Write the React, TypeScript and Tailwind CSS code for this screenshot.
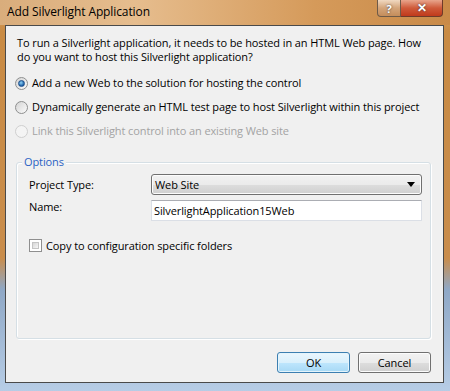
import React from "react";

const font = { fontFamily: '"Open Sans", "Noto Sans", sans-serif' };

function Radio({ checked, disabled }: { checked?: boolean; disabled?: boolean }) {
  return (
    <span
      className={`relative inline-flex h-[13px] w-[13px] shrink-0 items-center justify-center rounded-full border ${
        disabled ? "border-[#cfcfcf] bg-[#f4f4f4]" : "border-[#8e8f8f] bg-gradient-to-br from-[#d4d4d4] to-[#fbfbfb]"
      }`}
    >
      {checked && (
        <span className="h-[7px] w-[7px] rounded-full border border-[#1d4f8a] bg-[radial-gradient(circle_at_40%_35%,#8fd3f5,#1b5fa8_70%)]" />
      )}
    </span>
  );
}

export default function App() {
  return (
    <div
      className="flex h-[391px] w-[450px] flex-col overflow-hidden bg-[linear-gradient(180deg,#dba56a_0%,#c98b44_8%,#c98d4c_66%,#8fa8c6_74%,#b7cde6_100%)] pb-[8px] pl-[5px] pr-[6px] text-[11px] leading-[14px] tracking-[-0.1px] text-black"
      style={font}
    >
      {/* title bar */}
      <div className="-ml-[5px] -mr-[6px] flex h-[25px] shrink-0 items-start bg-[linear-gradient(90deg,#d9ad7c_0%,#e6bd8e_30%,#d59a5a_70%,#c98a48_100%)] pl-[7px] pr-[7px]">
        <div className="pt-[3px] text-[12px] leading-[18px] text-black">Add Silverlight Application</div>
        <div className="ml-auto flex h-[17px]">
          <div className="flex w-[24px] items-center justify-center rounded-bl-[4px] border border-t-0 border-[#6e5a48] bg-[linear-gradient(180deg,#f0d9c1,#d4a57a_50%,#c48d5b)] text-[11px] font-bold leading-none text-white [text-shadow:0_0_2px_#333]">
            ?
          </div>
          <div className="flex w-[42px] items-center justify-center rounded-br-[4px] border border-l-0 border-t-0 border-[#6e3a2a] bg-[linear-gradient(180deg,#e8a58c,#cf5a3a_50%,#c03a1c)] text-[12px] font-bold leading-none text-white [text-shadow:0_0_2px_#333]">
            ✕
          </div>
        </div>
      </div>

      {/* client area */}
      <div className="flex flex-1 flex-col border border-[#4a4a4a] bg-[#f0f0f0]">
        <div className="pl-[11px] pt-[10px]">
          To run a Silverlight application, it needs to be hosted in an HTML Web page. How
          <br />
          do you want to host this Silverlight application?
        </div>

        <div className="mt-[7px] flex flex-col pl-[9px]">
          <label className="flex h-[24px] items-center gap-[4px] whitespace-nowrap">
            <Radio checked />
            <span>Add a new Web to the solution for hosting the control</span>
          </label>
          <label className="flex h-[24px] items-center gap-[4px] whitespace-nowrap">
            <Radio />
            <span>Dynamically generate an HTML test page to host Silverlight within this project</span>
          </label>
          <label className="flex h-[24px] items-center gap-[4px] whitespace-nowrap text-[#a3a3a3]">
            <Radio disabled />
            <span>Link this Silverlight control into an existing Web site</span>
          </label>
        </div>

        {/* group box */}
        <div className="relative ml-[10px] mr-[12px] mt-[19px] h-[177px] rounded-[3px] border border-[#d5dfe5] shadow-[inset_1px_1px_0_#fff,1px_1px_0_#fff]">
          <span className="absolute -top-[8px] left-[5px] bg-[#f0f0f0] px-[2px] leading-[14px] text-[#2b62c4]">Options</span>
          <div className="flex flex-col pl-[12px] pr-[8px] pt-[11px]">
            <div className="flex h-[21px] items-center">
              <span className="w-[122px]">Project Type:</span>
              <div className="flex h-[21px] flex-1 items-center rounded-[3px] border border-[#707070] bg-[linear-gradient(180deg,#f2f2f2_0%,#ebebeb_50%,#dddddd_51%,#cfcfcf_100%)] pl-[3px] pr-[6px] shadow-[inset_0_0_0_1px_#fcfcfc]">
                <span>Web Site</span>
                <svg className="ml-auto" width="8" height="5" viewBox="0 0 8 5">
                  <path d="M0 0 H8 L4 5 Z" fill="#000" />
                </svg>
              </div>
            </div>
            <div className="mt-[5px] flex h-[21px] items-start">
              <span className="w-[122px]">Name:</span>
              <div className="flex h-[21px] flex-1 items-center border border-[#dbdfe6] border-t-[#abadb3] bg-white pl-[2px]">
                SilverlightApplication15Web
              </div>
            </div>
            <label className="mt-[18px] flex h-[13px] items-center gap-[4px]">
              <span className="h-[13px] w-[13px] shrink-0 border border-[#8f8f8f] bg-white p-[2px]">
                <span className="block h-full w-full border border-[#c4c4c4] bg-gradient-to-br from-[#d6d6d6] to-[#f6f6f6]" />
              </span>
              <span>Copy to configuration specific folders</span>
            </label>
          </div>
        </div>

        <div className="mt-[13px] flex justify-end gap-[8px] pr-[12px]">
          <button className="h-[21px] w-[73px] rounded-[3px] border border-[#3c7fb1] bg-[linear-gradient(180deg,#eaf6fd_0%,#d9f0fc_50%,#bee6fd_51%,#a7d9f5_100%)] leading-none shadow-[inset_0_0_0_1px_#e4f4fc]">
            OK
          </button>
          <button className="h-[21px] w-[73px] rounded-[3px] border border-[#707070] bg-[linear-gradient(180deg,#f2f2f2_0%,#ebebeb_50%,#dddddd_51%,#cfcfcf_100%)] leading-none shadow-[inset_0_0_0_1px_#fcfcfc]">
            Cancel
          </button>
        </div>
      </div>
    </div>
  );
}
